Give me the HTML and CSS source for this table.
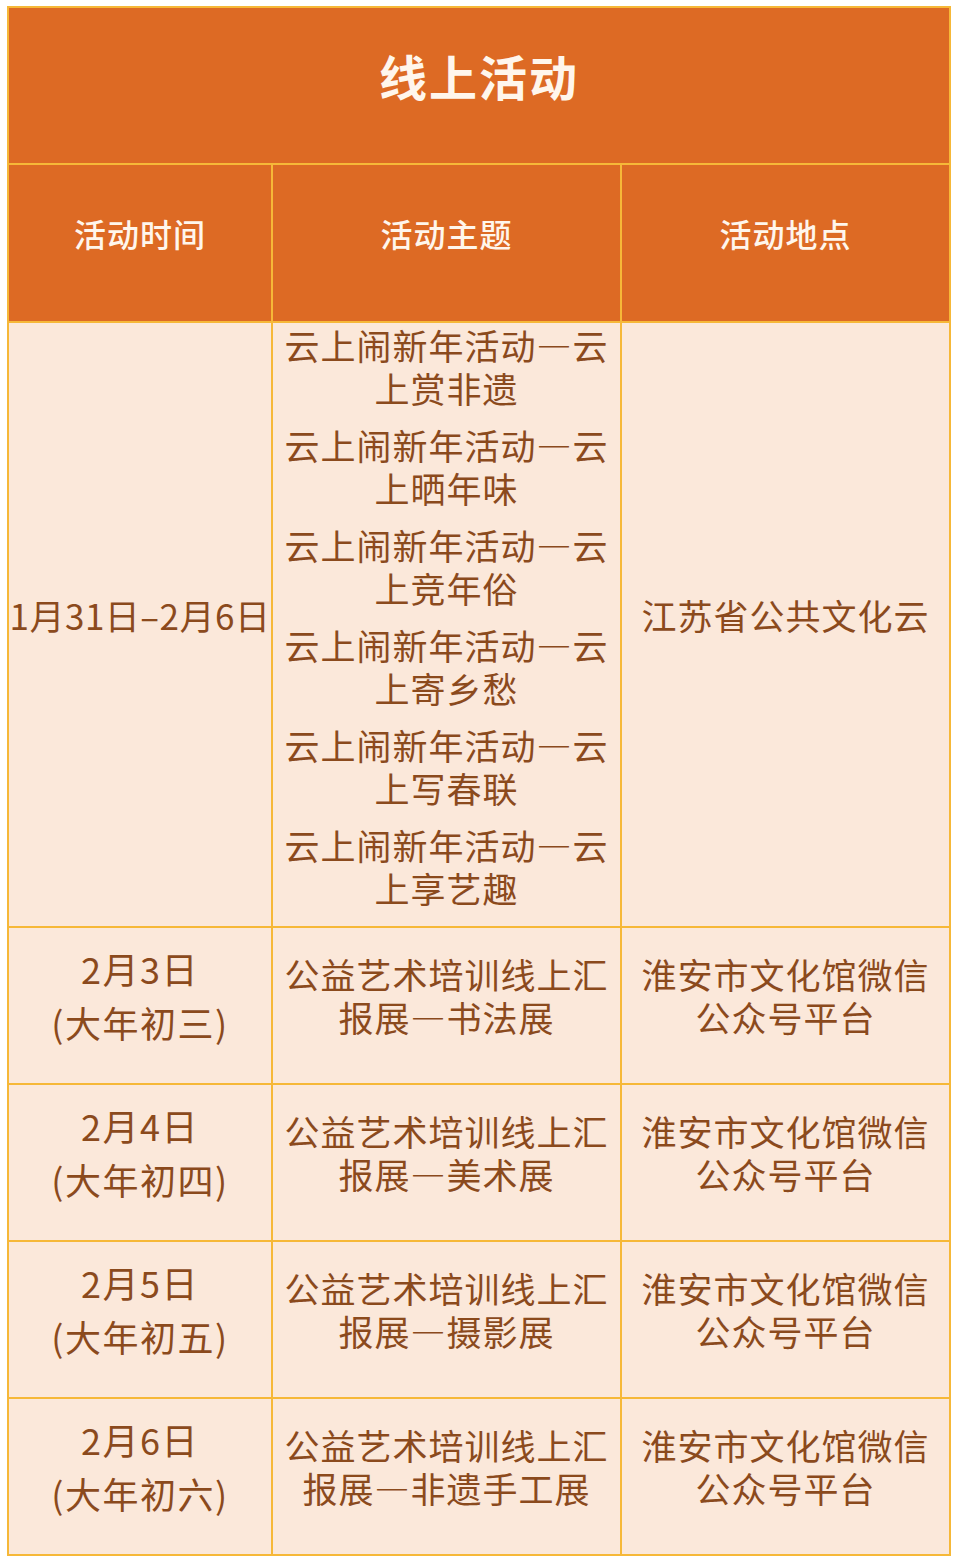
FILE: index.html
```html
<!DOCTYPE html>
<html lang="zh">
<head>
<meta charset="utf-8">
<link rel="stylesheet" href="styles.css">
</head>
<body>
<table class="schedule">
  <colgroup>
    <col class="c1"><col class="c2"><col class="c3">
  </colgroup>
  <tr class="title-row"><th colspan="3" class="title">线上活动</th></tr>
  <tr class="head-row">
    <th>活动时间</th><th>活动主题</th><th>活动地点</th>
  </tr>
  <tr class="big-row">
    <td class="date">1月31日–2月6日</td>
    <td class="topics">
      <p>云上闹新年活动—云<br>上赏非遗</p>
      <p>云上闹新年活动—云<br>上晒年味</p>
      <p>云上闹新年活动—云<br>上竞年俗</p>
      <p>云上闹新年活动—云<br>上寄乡愁</p>
      <p>云上闹新年活动—云<br>上写春联</p>
      <p>云上闹新年活动—云<br>上享艺趣</p>
    </td>
    <td>江苏省公共文化云</td>
  </tr>
  <tr class="row">
    <td class="date2">2月3日<br>(大年初三)</td>
    <td>公益艺术培训线上汇<br>报展—书法展</td>
    <td>淮安市文化馆微信<br>公众号平台</td>
  </tr>
  <tr class="row">
    <td class="date2">2月4日<br>(大年初四)</td>
    <td>公益艺术培训线上汇<br>报展—美术展</td>
    <td>淮安市文化馆微信<br>公众号平台</td>
  </tr>
  <tr class="row">
    <td class="date2">2月5日<br>(大年初五)</td>
    <td>公益艺术培训线上汇<br>报展—摄影展</td>
    <td>淮安市文化馆微信<br>公众号平台</td>
  </tr>
  <tr class="row">
    <td class="date2">2月6日<br>(大年初六)</td>
    <td>公益艺术培训线上汇<br>报展—非遗手工展</td>
    <td>淮安市文化馆微信<br>公众号平台</td>
  </tr>
</table>
</body>
</html>
```

FILE: styles.css
```css
html, body {
  margin: 0;
  padding: 0;
  background: #ffffff;
}
body {
  padding: 6px 0 0 7px;
  font-family: "Noto Sans CJK SC", "Noto Sans", sans-serif;
}
.schedule {
  border-collapse: collapse;
  table-layout: fixed;
  width: 942px;
}
.c1 { width: 264px; }
.c2 { width: 349px; }
.c3 { width: 329px; }
.schedule th,
.schedule td {
  border: 2px solid #f6b838;
  text-align: center;
  vertical-align: middle;
  padding: 0 0 21px 0;
}
.schedule th {
  background: #dd6a24;
  color: #fff6ec;
  font-weight: 500;
}
.title-row { height: 157px; }
.title {
  font-size: 48px;
  font-weight: 700 !important;
  letter-spacing: 2px;
}
.head-row { height: 158px; }
.head-row th {
  font-size: 32px;
  letter-spacing: 1px;
}
.schedule td {
  background: #fbe8da;
  color: #8b4a1d;
  font-size: 35px;
  line-height: 43px;
  letter-spacing: 1px;
  font-weight: 400;
}
.big-row { height: 605px; }
.row { height: 157px; }
.date {
  font-size: 35px !important;
  letter-spacing: 0.5px !important;
  white-space: nowrap;
}
.date2 {
  line-height: 54px !important;
  font-size: 36px !important;
  letter-spacing: 1.5px !important;
}
.topics {
  vertical-align: top !important;
  padding: 0 !important;
}
.topics p {
  margin: 0 0 14px 0;
}
.topics p:last-child {
  margin-bottom: 0;
}
```
